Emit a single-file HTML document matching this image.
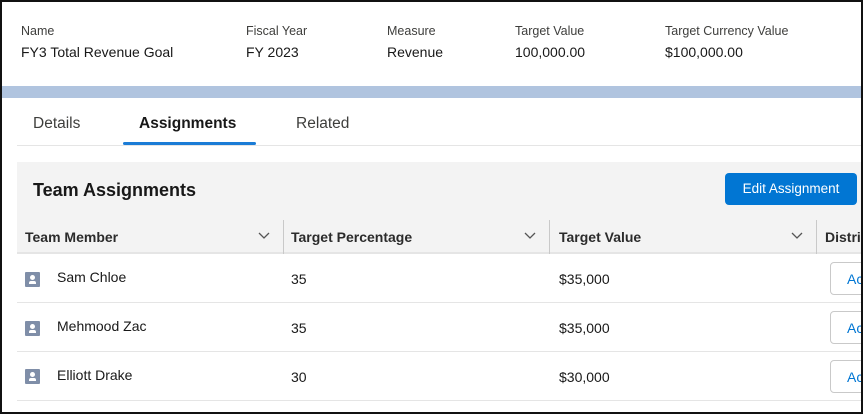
<!DOCTYPE html>
<html><head><style>
*{box-sizing:border-box;margin:0;padding:0}
body{width:863px;height:414px;overflow:hidden;background:#fff;font-family:"Liberation Sans",sans-serif;color:#181818;position:relative}
.frame{position:absolute;inset:0;border:2px solid #111;pointer-events:none;z-index:10}
.a{position:absolute;white-space:nowrap}
.lbl{font-size:12.5px;color:#3e3e3c;top:24px}
.val{font-size:14px;top:44px}
.band{position:absolute;left:0;top:86px;width:863px;height:12px;background:#b0c4df}
.card{position:absolute;left:0;top:0;width:863px;height:87px;background:#fff;border-bottom:1px solid #d8dde6;box-shadow:0 1px 2px rgba(0,0,0,.1)}
.tab{font-size:15.5px;top:115px;color:#3e3e3c}
.gray{position:absolute;left:17px;top:162px;width:846px;height:92px;background:#f3f3f3}
.th{font-size:14px;font-weight:bold;top:229px;color:#2b2b2b}
.chev{position:absolute;top:230px;width:14px;height:10px}
.vd{position:absolute;top:220px;height:34px;width:1px;background:#c9c9c9}
.row{position:absolute;left:17px;width:846px;height:1px;background:#e5e5e5}
.td{font-size:14px;color:#181818}
.ic{position:absolute;left:25px;width:15px;height:15px;background:#7f8ea8;border-radius:1px}
.ic::before{content:"";position:absolute;left:5px;top:3px;width:5px;height:5px;border-radius:50%;background:#fff}
.ic::after{content:"";position:absolute;left:4px;top:9px;width:7px;height:3px;border-radius:2px 2px 0 0;background:#fff}
.btn2{position:absolute;left:830px;width:40px;height:33px;border:1px solid #c9c9c9;border-radius:4px;background:#fff;color:#0176d3;font-size:14px;padding:8px 0 0 16px}
</style></head><body>
<div class="card"></div>
<div class="band"></div>
<div class="a lbl" style="left:21px">Name</div>
<div class="a lbl" style="left:246px">Fiscal Year</div>
<div class="a lbl" style="left:387px">Measure</div>
<div class="a lbl" style="left:515px">Target Value</div>
<div class="a lbl" style="left:665px">Target Currency Value</div>
<div class="a val" style="left:21px">FY3 Total Revenue Goal</div>
<div class="a val" style="left:246px">FY 2023</div>
<div class="a val" style="left:387px">Revenue</div>
<div class="a val" style="left:515px">100,000.00</div>
<div class="a val" style="left:665px">$100,000.00</div>
<div class="a tab" style="left:33px">Details</div>
<div class="a tab" style="left:139px;font-weight:bold;color:#181818">Assignments</div>
<div class="a tab" style="left:296px">Related</div>
<div style="position:absolute;left:17px;top:145px;width:846px;height:1px;background:#e5e5e5"></div>
<div style="position:absolute;left:123px;top:142px;width:133px;height:3px;background:#1b7cd6;border-radius:2px"></div>
<div class="gray"></div>
<div class="a" style="left:33px;top:180px;font-size:18px;font-weight:bold">Team Assignments</div>
<div class="a" style="left:725px;top:173px;width:132px;height:32px;background:#0176d3;border-radius:4px;color:#fff;font-size:13.5px;text-align:center;line-height:32px">Edit Assignment</div>
<div style="position:absolute;left:17px;top:220px;width:846px;height:34px;background:#f3f3f3;border-bottom:2px solid #e5e5e5"></div>
<div class="a th" style="left:25px">Team Member</div>
<div class="a th" style="left:291px">Target Percentage</div>
<div class="a th" style="left:559px">Target Value</div>
<div class="a th" style="left:825px">Distri</div>
<svg class="chev" style="left:257px" viewBox="0 0 14 10"><path d="M2 3l5 5 5-5" fill="none" stroke="#555" stroke-width="1.3"/></svg>
<svg class="chev" style="left:523px" viewBox="0 0 14 10"><path d="M2 3l5 5 5-5" fill="none" stroke="#555" stroke-width="1.3"/></svg>
<svg class="chev" style="left:790px" viewBox="0 0 14 10"><path d="M2 3l5 5 5-5" fill="none" stroke="#555" stroke-width="1.3"/></svg>
<div class="vd" style="left:283px"></div><div class="vd" style="left:549px"></div><div class="vd" style="left:816px"></div>

<div class="ic" style="top:272px"></div>
<div class="a td" style="left:57px;top:269px">Sam Chloe</div>
<div class="a td" style="left:291px;top:271px">35</div>
<div class="a td" style="left:559px;top:271px">$35,000</div>
<div class="btn2" style="top:262px">Ac</div>
<div class="row" style="top:302px"></div>

<div class="ic" style="top:321px"></div>
<div class="a td" style="left:57px;top:318px">Mehmood Zac</div>
<div class="a td" style="left:291px;top:320px">35</div>
<div class="a td" style="left:559px;top:320px">$35,000</div>
<div class="btn2" style="top:311px">Ac</div>
<div class="row" style="top:351px"></div>

<div class="ic" style="top:369px"></div>
<div class="a td" style="left:57px;top:367px">Elliott Drake</div>
<div class="a td" style="left:291px;top:369px">30</div>
<div class="a td" style="left:559px;top:369px">$30,000</div>
<div class="btn2" style="top:360px">Ac</div>
<div class="row" style="top:400px"></div>
<div class="frame"></div>
</body></html>
